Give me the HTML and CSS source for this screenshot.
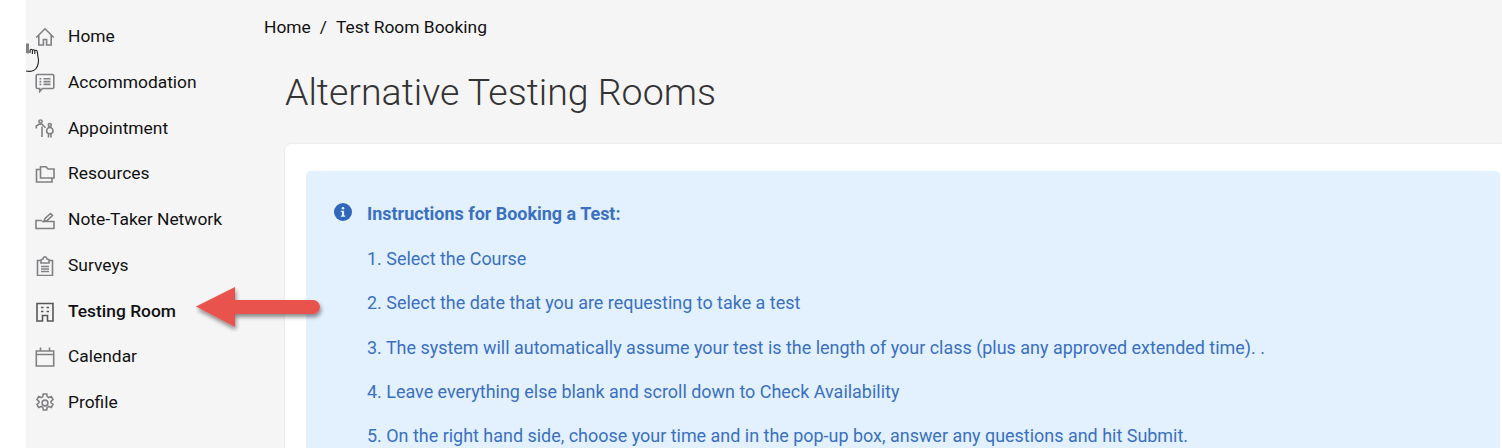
FILE: index.html
```html
<!DOCTYPE html>
<html lang="en">
<head>
  <meta charset="UTF-8" />
  <title>Alternative Testing Rooms</title>
  <link rel="stylesheet" href="styles.css">
</head>
<body>
  <div class="app">
    <nav class="sidebar" aria-label="Main">
      <a class="nav-item" href="#">
        <svg class="nav-icon" viewBox="0 0 20 20"><path d="M1.200 10.500 10 1.800l8.800 8.700M3.800 8v10h4.600v-5.500h3.200V18h4.600V8"/></svg>
        Home
      </a>
      <a class="nav-item" href="#">
        <svg class="nav-icon" viewBox="0 0 20 20"><path d="M2.500 1.500h15a1.300 1.300 0 0 1 1.300 1.300v11.400a1.300 1.300 0 0 1-1.300 1.300H7.500l-2.800 3v-3H2.500a1.300 1.300 0 0 1-1.300-1.300V2.800a1.300 1.300 0 0 1 1.300-1.300zM4.500 5.800h1.800M8.500 5.800h7M4.500 8.600h1.800M8.500 8.600h7M4.500 11.400h1.800M8.500 11.400h7"/></svg>
        Accommodation
      </a>
      <a class="nav-item" href="#">
        <svg class="nav-icon" viewBox="0 0 20 20"><circle cx="5.500" cy="2.600" r="1.600"/><path d="M1.300 9.500V7l2.700-1.700h3l3.500 3.500M7 7.500V18"/><circle cx="14.800" cy="6" r="1.500"/><path d="M14.800 8.500a3.200 3.200 0 0 1 3.200 3.300c0 2-1.300 3-3.200 3s-3.200-1-3.200-3a3.200 3.200 0 0 1 3.200-3.300zM13.500 14.800V18.500M16 14.800V18.500"/></svg>
        Appointment
      </a>
      <a class="nav-item" href="#">
        <svg class="nav-icon" viewBox="0 0 20 20"><path d="M5.500 14V2.800h5.500l2 2.200h6v9zM5.500 5.500H1.500v12.500h15.500v-4"/></svg>
        Resources
      </a>
      <a class="nav-item" href="#">
        <svg class="nav-icon" viewBox="0 0 20 20"><path d="M7 10.500H1v8h18v-7H7M9 11.500l1-3 5.500-5 2 2-5.500 5z"/></svg>
        Note-Taker Network
      </a>
      <a class="nav-item" href="#">
        <svg class="nav-icon" viewBox="0 0 20 20"><path d="M6 4.500H2.500v15h15v-15H14M6 7V3.800l2-.8C8.300 1.300 9 .8 10 .8s1.700.5 2 2.200l2 .8V7zM6 10.500h8M6 13h8M6 15.500h8"/></svg>
        Surveys
      </a>
      <a class="nav-item active" href="#">
        <svg class="nav-icon" viewBox="0 0 20 20"><path d="M2 1.500h16v17.500h-5.500v-5.500h-5V19H2zM6 5.500h2.500M11.500 5.500H14M6 9.500h2.500M11.500 9.500H14"/></svg>
        Testing Room
      </a>
      <a class="nav-item" href="#">
        <svg class="nav-icon" viewBox="0 0 20 20"><path d="M1.300 4h17.400v15H1.300zM1.300 7.500h17.400M5.500.5V4M14.500.5V4"/></svg>
        Calendar
      </a>
      <a class="nav-item" href="#">
        <svg class="nav-icon" viewBox="0 0 20 20"><circle cx="10" cy="10" r="2.900"/><path d="M8.300 1h3.400l.5 2.600 1.600.9 2.500-.9 1.700 3-2 1.700v1.400l2 1.700-1.700 3-2.500-.9-1.600.9-.5 2.600H8.300l-.5-2.600-1.600-.9-2.500.9-1.700-3 2-1.700V8.300l-2-1.700 1.700-3 2.500.9 1.600-.9z"/></svg>
        Profile
      </a>
    </nav>

    <main class="content">
      <div class="breadcrumb">
        <span>Home</span>
        <span class="sep">/</span>
        <span>Test Room Booking</span>
      </div>
      <h1 class="page-title">Alternative Testing Rooms</h1>
      <section class="card">
        <div class="alert">
          <svg class="alert-icon" viewBox="0 0 18 18">
            <circle cx="9" cy="9" r="9" fill="#3067b8"/>
            <circle cx="9" cy="5.200" r="1.300" fill="#e3f0fe"/>
            <path d="M6.800 7.700h3.300v4.700h1.200v1.300H6.800v-1.300h1.100V9H6.800z" fill="#e3f0fe"/>
          </svg>
          <div class="alert-body">
            <p class="alert-title">Instructions for Booking a Test:</p>
            <p>1. Select the Course</p>
            <p>2. Select the date that you are requesting to take a test</p>
            <p>3. The system will automatically assume your test is the length of your class (plus any approved extended time). .</p>
            <p>4. Leave everything else blank and scroll down to Check Availability</p>
            <p>5. On the right hand side, choose your time and in the pop-up box, answer any questions and hit Submit.</p>
          </div>
        </div>
      </section>
    </main>
  </div>

  <!-- screenshot annotations -->
  <svg class="arrow" viewBox="0 0 130 46">
    <defs>
      <filter id="arrowShadow" x="-20%" y="-30%" width="140%" height="170%">
        <feDropShadow dx="1" dy="3" stdDeviation="2" flood-color="#000" flood-opacity="0.45"/>
      </filter>
    </defs>
    <path d="M0 20.500 39 1v13h78a7 7 0 0 1 0 14H39v13z" fill="#e9534e" filter="url(#arrowShadow)"/>
  </svg>
  <svg class="cursor" viewBox="0 0 14 32">
    <path d="M0 1.500V11M2 1.500v10M4 11V8.500a1.200 1.200 0 0 1 2.400 0V12M6.400 9a1.200 1.200 0 0 1 2.400 0v3M8.800 9.500a1.200 1.200 0 0 1 2.400 0L12.500 18c0 5-2 9-5 10.500-2.500 1-5.500 1-7.500.5"/>
  </svg>
</body>
</html>
```

FILE: styles.css
```css
* {
  box-sizing: border-box;
}
html, body {
  margin: 0;
  height: 448px;
  overflow: hidden;
  background: #fff;
}
body {
  position: relative;
  font-family: Roboto, "Liberation Sans", sans-serif;
  color: #111;
}
.app {
  display: flex;
  height: 100%;
  margin-left: 26px;
  background: #f5f5f5;
}
.sidebar {
  width: 259px;
  flex-shrink: 0;
  padding-top: 13.300px;
}
.nav-item {
  display: flex;
  align-items: center;
  gap: 13px;
  height: 45.75px;
  padding-left: 9px;
  font-size: 17.400px;
  color: #111;
  text-decoration: none;
}
.nav-item.active {
  font-weight: 500;
}
.nav-icon {
  width: 20px;
  height: 20px;
  flex-shrink: 0;
  margin-top: 2px;
  fill: none;
  stroke: #808184;
  stroke-width: 1.600;
}
.nav-item.active .nav-icon {
  stroke: #56585a;
}
.content {
  flex: 1;
  min-width: 0;
  margin-left: -21px;
}
.breadcrumb {
  display: flex;
  gap: 9px;
  height: 19px;
  margin-top: 18px;
  font-size: 17.400px;
  line-height: 19px;
}
.page-title {
  margin: 34px 0 0 21px;
  font-size: 37.500px;
  line-height: 43px;
  font-weight: 300;
  color: #333;
}
.card {
  margin: 30px 0 0 21px;
  height: 320px;
  padding: 27px 2px 0 21px;
  background: #fff;
  border-radius: 6px 0 0 0;
  box-shadow: 0 0 2px rgba(0, 0, 0, 0.12);
}
.alert {
  display: flex;
  gap: 15px;
  height: 100%;
  padding: 33.400px 20px 0 28px;
  background: #e3f0fe;
  border-radius: 5px 5px 0 0;
  color: #3a70bf;
}
.alert-icon {
  width: 18px;
  height: 18px;
  flex-shrink: 0;
  margin-top: -1px;
}
.alert-body {
  font-size: 17.950px;
  line-height: 20px;
}
.alert-body p {
  margin: 0 0 24.400px;
}
.alert-title {
  font-weight: 700;
}
.arrow {
  position: absolute;
  left: 196px;
  top: 286px;
  width: 130px;
  height: 46px;
}
.cursor {
  position: absolute;
  left: 26px;
  top: 42px;
  width: 14px;
  height: 32px;
  fill: none;
  stroke: #222;
  stroke-width: 1.100;
}
```
